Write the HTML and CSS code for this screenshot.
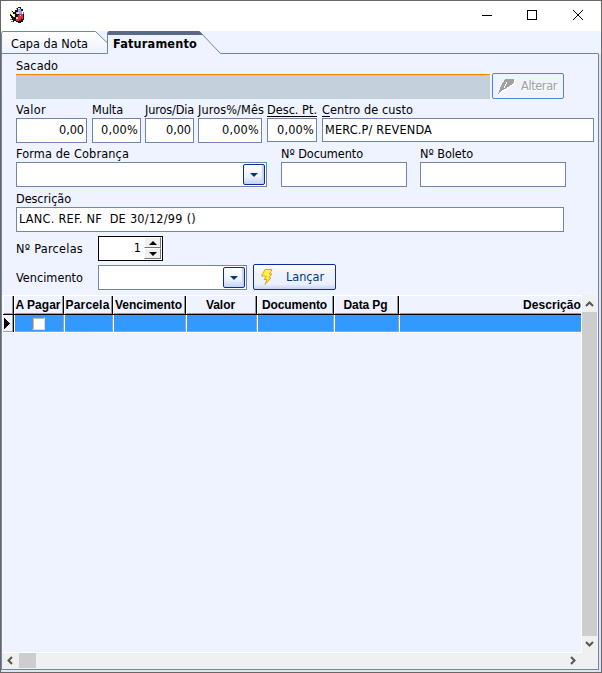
FILE: index.html
```html
<!DOCTYPE html>
<html lang="pt-BR">
<head>
<meta charset="utf-8">
<title>Faturamento</title>
<link rel="stylesheet" href="styles.css">
</head>
<body>
<div class="window">
  <header class="titlebar">
    <svg class="app-icon" width="16" height="16" viewBox="0 0 16 16" shape-rendering="crispEdges">
      <path fill="#111" d="M8 1h1V0h3v2h2v2h-1v3h2v6h-1v2h-2v1H9v-1H7v-1H5v1H4v-2H3v-2H2V9H1V7h1V5h1V4h1v1h2V3h2z"/>
      <path fill="#f6f29a" d="M0 5h2v1H0zM2 3h1v2h1v2h2v3H4V8H2zM1 9h1v1H1z"/>
      <path fill="#fff" d="M3 7h2v2H3zM9 1h2v1H9z"/>
      <path fill="#9ca0ee" d="M9 2h3v2h1v3H7V5h2z"/>
      <path fill="#dce0ff" d="M8 5h2v2H8z"/>
      <path fill="#e23243" d="M10 7h4v5h-2v2H7v-4h2V8h1z"/>
      <path fill="#ffc4cc" d="M7 10h2v2H7zM11 8h1v1h-1z"/>
      <path fill="#8c1020" d="M12 11h1v1h-1v2h-2v-1h2z"/>
      <path fill="#777" d="M14 5h1v2h-1zM1 12h2v1H1zM2 14h2v1H2zM7 1h1v1H7z"/>
    </svg>
    <svg class="controls" width="104" height="12" viewBox="0 0 104 12" fill="none" stroke="#000">
      <path shape-rendering="crispEdges" d="M0 6.5h10M45.5 1.500h9v9h-9z"/>
      <path d="M91 1l10 10M101 1L91 11"/>
    </svg>
  </header>
  <nav class="tabs">
    <svg class="tab-shapes" width="600" height="23" viewBox="0 0 600 23">
      <defs><linearGradient id="tab" x2="0" y2="1"><stop stop-color="#fff"/><stop offset="1" stop-color="#edf2fe"/></linearGradient></defs>
      <path fill="url(#tab)" d="M1 22V2l1-1h93l11 11v10z"/>
      <path fill="none" stroke="#6f86ab" d="M.5 23V2.500l1-2H94.500l12 11.500M0 22.500h106.500V1.500l1-1h91l21 22H597.500"/>
      <path fill="#596987" d="M107 1.500l1-1.500h90l4 4h-95z"/>
    </svg>
    <span class="tab"><span class="t" data-w="77">Capa da Nota</span></span>
    <span class="tab active"><span class="t" data-w="84">Faturamento</span></span>
  </nav>
  <main class="page">
    <section class="form">
      <div class="row payer">
        <div class="field"><label><span class="t" data-w="42">Sacado</span></label><div class="readonly"></div></div>
        <button class="edit" disabled>
          <svg width="18" height="17" viewBox="0 0 18 17" shape-rendering="crispEdges"><path fill="#fff" d="M8 2h9v4L9 12l-5 2-3 3 1-4z"/><path fill="#a0a0a0" d="M7 1h9v4L7 11l-3 1-3 4H0l3-8z"/><path stroke="#fff" d="M6 10l3-6"/></svg>
          <span class="t" data-w="36">Alterar</span>
        </button>
      </div>
      <div class="row values">
        <div class="field w71"><label><span class="t" data-w="30">Valor</span></label><div class="input right"><span class="t" data-w="25">0,00</span></div></div>
        <div class="field w49"><label><span class="t" data-w="31">Multa</span></label><div class="input right"><span class="t" data-w="37">0,00%</span></div></div>
        <div class="field w49"><label><span class="t" data-w="49">Juros/Dia</span></label><div class="input right"><span class="t" data-w="25">0,00</span></div></div>
        <div class="field w64"><label><span class="t" data-w="66">Juros%/Mês</span></label><div class="input right"><span class="t" data-w="37">0,00%</span></div></div>
        <div class="field w50"><label><span class="t under" data-w="50">Desc. Pt.</span></label><div class="input right short"><span class="t" data-w="37">0,00%</span></div></div>
        <div class="field w272"><label><span class="t" data-w="91"><u>C</u>entro de custo</span></label><div class="input short"><span class="t" data-w="107">MERC.P/ REVENDA</span></div></div>
      </div>
      <div class="row billing">
        <div class="field w251"><label><span class="t" data-w="113">Forma de Cobrança</span></label><div class="input combo"><span class="drop"></span></div></div>
        <div class="field w126"><label><span class="t" data-w="82">Nº Documento</span></label><div class="input"></div></div>
        <div class="field w146"><label><span class="t" data-w="53">Nº Boleto</span></label><div class="input"></div></div>
      </div>
      <div class="row description">
        <div class="field w548"><label><span class="t" data-w="55">Descrição</span></label><div class="input"><span class="t pre" data-w="177">LANC. REF. NF  DE 30/12/99 ()</span></div></div>
      </div>
      <div class="line parcels">
        <label><span class="t" data-w="67">Nº Parcelas</span></label>
        <div class="spinner"><span class="t">1</span><span class="steps"><i class="step up"></i><i class="step down"></i></span></div>
      </div>
      <div class="line due">
        <label><span class="t" data-w="67">Vencimento</span></label>
        <div class="input combo w149"><span class="drop"></span></div>
        <button class="launch">
          <svg width="14" height="18" viewBox="0 0 14 18"><path fill="#ffed38" stroke="#dcaa10" d="M4 1.500h7L8.500 6H11L7.500 10H10L4 16.500l2-5H3L5.500 8H.5z"/><path stroke="#fff8a0" d="M5 3h4M4 7h4M6 10h2"/></svg>
          <span class="t" data-w="38">Lançar</span>
        </button>
      </div>
    </section>
    <section class="grid-area">
      <div class="grid">
        <div class="tr head">
          <div></div><div><span class="t" data-w="45">A Pagar</span></div><div><span class="t" data-w="44">Parcela</span></div><div><span class="t" data-w="67">Vencimento</span></div><div><span class="t" data-w="29">Valor</span></div><div><span class="t" data-w="65">Documento</span></div><div><span class="t" data-w="44">Data Pg</span></div><div class="end"><span class="t" data-w="58">Descrição</span></div>
        </div>
        <div class="tr body">
          <div class="marker"><svg width="7" height="11" viewBox="0 0 7 11" shape-rendering="crispEdges"><path d="M0 0l6 5.500L0 11z"/></svg></div><div><i class="check"></i></div><div></div><div></div><div></div><div></div><div></div><div></div>
        </div>
      </div>
      <div class="vbar">
        <svg width="15" height="17" viewBox="0 0 15 17"><path fill="none" stroke="#555" stroke-width="2" d="M4 11l3.500-3.500L11 11"/></svg>
        <div class="vthumb"></div>
        <svg width="15" height="17" viewBox="0 0 15 17"><path fill="none" stroke="#555" stroke-width="2" d="M4 6l3.500 3.500L11 6"/></svg>
      </div>
    </section>
    <div class="hbar">
      <svg width="17" height="15" viewBox="0 0 17 15"><path fill="none" stroke="#555" stroke-width="2" d="M10 4L6.500 7.500L10 11"/></svg>
      <div class="hthumb"></div>
      <svg class="next" width="17" height="15" viewBox="0 0 17 15"><path fill="none" stroke="#555" stroke-width="2" d="M6 4l3.500 3.500L6 11"/></svg>
    </div>
  </main>
</div>
<script src="fit.js"></script>
</body>
</html>
```
FILE: styles.css
```css
* { box-sizing: border-box; }
body { margin: 0; font: 12.6px/16px "DejaVu Sans Condensed", "DejaVu Sans", sans-serif; font-stretch: condensed; color: #000; }
svg { display: block; flex: none; }
button { margin: 0; padding: 0; font: inherit; }
.t { display: inline-block; white-space: nowrap; }
.pre { white-space: pre; }
.under, u { text-decoration: underline; text-underline-offset: 2px; }
.window { width: 602px; height: 673px; border: 1px solid #6b6664; background: #dfe5ef; overflow: hidden; }
.titlebar { height: 30px; background: #fff; display: flex; justify-content: space-between; padding: 6px 15px 0 8px; }
.controls { margin-top: 2px; }
.tabs { height: 23px; display: flex; position: relative; background: #eef3ff; }
.tab-shapes { position: absolute; left: 0; top: 0; }
.tab { position: relative; width: 106px; padding: 5px 0 0 10px; }
.tab.active { padding-left: 6px; font-weight: bold; }
.page { width: 598px; height: 616px; background: #eef3ff; border: 1px solid #6f86ab; border-top: 0; }
.form { height: 241px; padding: 4px 0 0 14px; }
.row { display: flex; align-items: flex-start; }
.row label { display: block; height: 16px; white-space: nowrap; }
.field { flex: none; }
.input { height: 25px; border: 1px solid #7085aa; background: #fff; display: flex; align-items: center; padding: 0 2px 2px; }
.right { justify-content: flex-end; }
.short { height: 24px; padding-bottom: 1px; }
.payer { height: 44px; }
.readonly { width: 474px; height: 25px; background: #c4d0dc; border-top: 1px solid #ff8000; }
.edit { width: 72px; height: 26px; margin: 15px 0 0 2px; display: flex; align-items: center; gap: 5px; padding-left: 5px; border: 1px solid #5482ed; border-radius: 2px; background: #f0f3fc; color: #a0a0a0; text-shadow: 1px 1px #fff; }
.values { height: 44px; }
.values .field:nth-child(2) { margin-left: 5px; }
.values .field:nth-child(3) { margin-left: 4px; }
.values .field:nth-child(4) { margin-left: 4px; }
.values .field:nth-child(5) { margin-left: 5px; }
.values .field:nth-child(6) { margin-left: 5px; }
.w71 { width: 71px; } .w49 { width: 49px; } .w64 { width: 64px; } .w50 { width: 50px; } .w272 { width: 272px; }
.w251 { width: 251px; } .w126 { width: 126px; } .w146 { width: 146px; } .w548 { width: 548px; } .w149 { width: 149px; }
.billing { height: 45px; gap: 14px; }
.billing .field:nth-child(3) { margin-left: -1px; }
.description { height: 45px; }
.combo { justify-content: flex-end; padding: 0; }
.drop { width: 22px; height: 21px; margin-right: 1px; border: 1px solid #0a2e98; border-radius: 2px; background: linear-gradient(#fff, #eef2fc 60%, #c5d3f5); box-shadow: inset -2px -1px 1px #c5d3f5; display: flex; align-items: center; justify-content: center; }
.drop::before { content: ""; border: 4px solid transparent; border-top-color: #003c74; border-bottom: 0; }
.line { display: flex; align-items: center; height: 29px; }
.line label { width: 82px; }
.parcels { padding-bottom: 5px; }
.parcels label { padding-top: 2px; }
.spinner { width: 65px; height: 25px; border: 1px solid #000; background: #fff; display: flex; align-items: center; justify-content: flex-end; padding: 0 1px 0 0; }
.steps { margin-left: 3px; }
.step { display: flex; width: 17px; height: 11px; align-items: center; justify-content: center; background: #f0f0f0; border: 1px solid #fff; border-right-color: #777; border-bottom-color: #777; }
.step::before { content: ""; border: 4px solid transparent; border-bottom-color: #000; border-top: 0; }
.step.down::before { border-top: 4px solid #000; border-bottom: 0; }
.due { align-items: flex-start; }
.due label { padding-top: 5px; }
.launch { width: 83px; height: 26px; margin: -1px 0 0 6px; border: 1px solid #0a2e98; border-radius: 2px; background: linear-gradient(#fff, #eef2ff 35%, #eaf0fe 80%, #c5d3f5); color: #003c74; display: flex; align-items: center; padding-left: 7px; gap: 11px; }
.grid-area { height: 358px; display: flex; }
.grid { width: 579px; border-top: 1px solid #fff; border-bottom: 1px solid #fff; border-left: 1px solid #f9fbff; }
.tr { display: grid; grid-template-columns: 11px 50px 49px 73px 71px 77px 65px 182px; }
.head { height: 19px; border-bottom: 1px solid #000; font: bold 12px/18px "Liberation Sans", sans-serif; }
.head > div { display: flex; justify-content: center; border-left: 1px solid #fff; border-right: 1px solid #000; box-shadow: inset -1px 0 #999, inset 0 -1px #999; }
.head .t { position: relative; left: -1px; }
.head .end { justify-content: flex-end; border-right: 0; box-shadow: inset 0 -1px #999; }
.head .end .t { left: 0; }
.body { height: 18px; border-bottom: 1px solid #fff; }
.body > div { background: #3399ff; border-right: 1px solid #fff; box-shadow: inset -1px -1px #a0a0a0; position: relative; left: 1px; }
.body > div:last-child { border-right: 0; box-shadow: inset 0 -1px #a0a0a0; margin-right: 1px; }
.body .marker { background: #eef3ff; border-right: 1px solid #000; padding: 3px 0 0 1px; left: 0; box-shadow: inset -1px -1px #a0a0a0, 1px 0 #fff; }
.check { display: block; width: 13px; height: 13px; margin: 2px 0 0 17px; background: #fff; border: 1px solid #888; border-right-color: #ddd; border-bottom-color: #ddd; box-shadow: inset 1px 1px #bbb; }
.vbar { width: 17px; background: #f0f0f0; border-left: 1px solid #fff; border-right: 1px solid #eef3ff; display: flex; flex-direction: column; }
.vthumb { flex: 1; background: #cdcdcd; }
.hbar { height: 16px; background: #f0f0f0; display: flex; }
.hthumb { width: 17px; height: 15px; background: #cdcdcd; }
.next { margin-left: auto; margin-right: 16px; }
```
FILE: fit.js
```js
// Spread each label's letters to its designed width.
document.querySelectorAll(".t[data-w]").forEach(function (el) {
  var width = Number(el.dataset.w);
  var spacing = (width - el.getBoundingClientRect().width) / el.textContent.length;
  el.style.letterSpacing = spacing + "px";
});
```
